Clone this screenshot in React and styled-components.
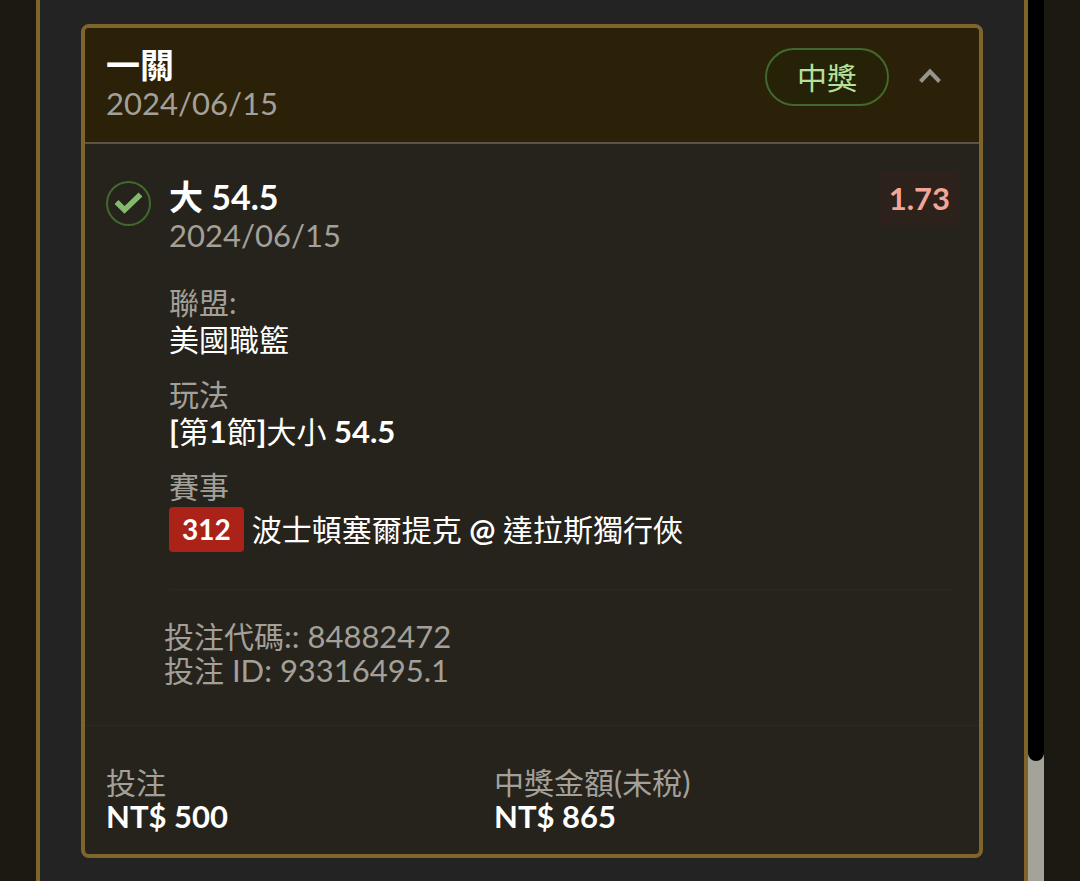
import React, { useState } from "react";
import styled, { createGlobalStyle } from "styled-components";

const GlobalStyle = createGlobalStyle`
  * { box-sizing: border-box; }
  body {
    margin: 0;
    background: #1c1912;
    color: #fff;
    font-family: Lato, "Noto Sans CJK TC", sans-serif;
    font-size: 30px;
  }
  p, h1, h2, dl, dt, dd { margin: 0; font-size: inherit; font-weight: inherit; }
`;

const Page = styled.div`
  display: flex;
  min-height: 100vh;
  padding: 0 36px;
`;

const Panel = styled.main`
  flex: 1;
  min-width: 0;
  padding: 24px 41px;
  background: #232323;
  border: solid #7f652a;
  border-width: 0 4px;
`;

const ScrollTrack = styled.div`
  width: 16px;
  background: #a4a39a;
`;

const ScrollThumb = styled.div`
  height: 761px;
  max-height: 100%;
  background: #000;
  border-radius: 0 0 8px 8px;
`;

const Card = styled.article`
  background: #26231d;
  border: 4px solid #7f652a;
  border-radius: 8px;
  overflow: hidden;
`;

const CardHeader = styled.header`
  display: flex;
  justify-content: space-between;
  align-items: flex-start;
  padding: 18px 32px 20px 21px;
  background: #2b2108;
  border-bottom: 2px solid #5b5344;
`;

const Latin = styled.span`
  font-size: 31px;
  line-height: 1;
  font-weight: ${(p) => (p.$bold ? 700 : "inherit")};
`;

const Title = styled.h2`
  && {
    font-size: 34px;
    font-weight: 700;
  }
  line-height: 38px;
`;

const DateText = styled.p`
  && { font-size: 31px; }
  line-height: 38px;
  color: #a3a099;
`;

const Actions = styled.div`
  display: flex;
  align-items: center;
  gap: 24px;
  padding-top: 2px;
`;

const Badge = styled.span`
  display: flex;
  align-items: center;
  height: 58px;
  padding: 0 30px 2px;
  border: 2px solid #41682d;
  border-radius: 29px;
  background: #252208;
  color: #b4e29b;
`;

const Toggle = styled.button`
  display: flex;
  padding: 4px;
  border: 0;
  background: none;
  color: #97948d;
  cursor: pointer;
`;

const Bet = styled.section`
  display: flex;
  gap: 18px;
  padding: 34px 20px 0 21px;
`;

const WonIcon = styled.svg`
  flex: none;
  width: 45px;
  height: 45px;
  margin-top: 3px;
`;

const BetBody = styled.div`
  flex: 1;
  min-width: 0;
  padding-right: 7px;
  padding-bottom: 37px;
  border-bottom: 1px solid #2b2822;
  margin-right: 7px;
`;

const BetTop = styled.div`
  display: flex;
  justify-content: space-between;
  align-items: flex-start;
`;

const Odds = styled.strong`
  padding: 8px 9px;
  margin: -7px -14px 0 0;
  background: #2c211b;
  color: #f3a697;
  font-size: 31px;
  line-height: 38px;
`;

const Details = styled.dl`
  display: grid;
  gap: 18px;
  margin-top: 30px;
  line-height: 37px;
`;

const Label = styled.dt`
  color: #a3a099;
`;

const Value = styled.dd`
  color: #fff;
`;

const Match = styled.dd`
  display: flex;
  align-items: center;
  gap: 8px;
  padding-top: 2px;
`;

const MatchNumber = styled.span`
  padding: 4px 13px;
  background: #ab2318;
  border-radius: 4px;
  font-size: 28px;
  font-weight: 700;
`;

const Codes = styled.section`
  padding: 29px 21px 38px 79px;
  line-height: 34px;
  color: #a3a099;
`;

const Totals = styled.dl`
  display: grid;
  grid-template-columns: 4fr 5fr;
  padding: 39px 0 21px 21px;
  border-top: 1px solid #2d2a24;
  line-height: 34px;
`;

const Amount = styled.dd`
  && {
    font-size: 31px;
    font-weight: 700;
  }
`;

export default function App() {
  const [open, setOpen] = useState(true);
  return (
    <>
      <GlobalStyle />
      <Page>
        <Panel>
          <Card>
            <CardHeader>
              <div>
                <Title>一關</Title>
                <DateText>2024/06/15</DateText>
              </div>
              <Actions>
                <Badge>中獎</Badge>
                <Toggle
                  type="button"
                  aria-expanded={open}
                  aria-label="切換詳情"
                  onClick={() => setOpen(!open)}
                >
                  <svg width="26" height="22" viewBox="0 0 26 22" fill="none">
                    <path d="M3.5 15.5L13 5.5L22.5 15.5" stroke="currentColor" strokeWidth="4" />
                  </svg>
                </Toggle>
              </Actions>
            </CardHeader>
            {open && (
              <>
                <Bet>
                  <WonIcon viewBox="0 0 45 45" fill="none" aria-hidden="true">
                    <circle cx="22.5" cy="22.5" r="21.5" stroke="#41682d" strokeWidth="2" />
                    <path
                      d="M10.5 21L18.5 29L34.5 13.5"
                      stroke="#84ba6c"
                      strokeWidth="5.5"
                    />
                  </WonIcon>
                  <BetBody>
                    <BetTop>
                      <div>
                        <Title>大 54.5</Title>
                        <DateText>2024/06/15</DateText>
                      </div>
                      <Odds>1.73</Odds>
                    </BetTop>
                    <Details>
                      <div>
                        <Label>聯盟:</Label>
                        <Value>美國職籃</Value>
                      </div>
                      <div>
                        <Label>玩法</Label>
                        <Value>
                          <Latin $bold>[</Latin>第<Latin $bold>1</Latin>節
                          <Latin $bold>]</Latin>大小<Latin $bold> 54.5</Latin>
                        </Value>
                      </div>
                      <div>
                        <Label>賽事</Label>
                        <Match>
                          <MatchNumber>312</MatchNumber>
                          <span>
                            波士頓塞爾提克<Latin $bold> @ </Latin>達拉斯獨行俠
                          </span>
                        </Match>
                      </div>
                    </Details>
                  </BetBody>
                </Bet>
                <Codes>
                  <p>
                    投注代碼<Latin>:: 84882472</Latin>
                  </p>
                  <p>
                    投注<Latin> ID: 93316495.1</Latin>
                  </p>
                </Codes>
              </>
            )}
            <Totals>
              <div>
                <Label>投注</Label>
                <Amount>NT$ 500</Amount>
              </div>
              <div>
                <Label>
                  中獎金額<Latin>(</Latin>未稅<Latin>)</Latin>
                </Label>
                <Amount>NT$ 865</Amount>
              </div>
            </Totals>
          </Card>
        </Panel>
        <ScrollTrack>
          <ScrollThumb />
        </ScrollTrack>
      </Page>
    </>
  );
}
